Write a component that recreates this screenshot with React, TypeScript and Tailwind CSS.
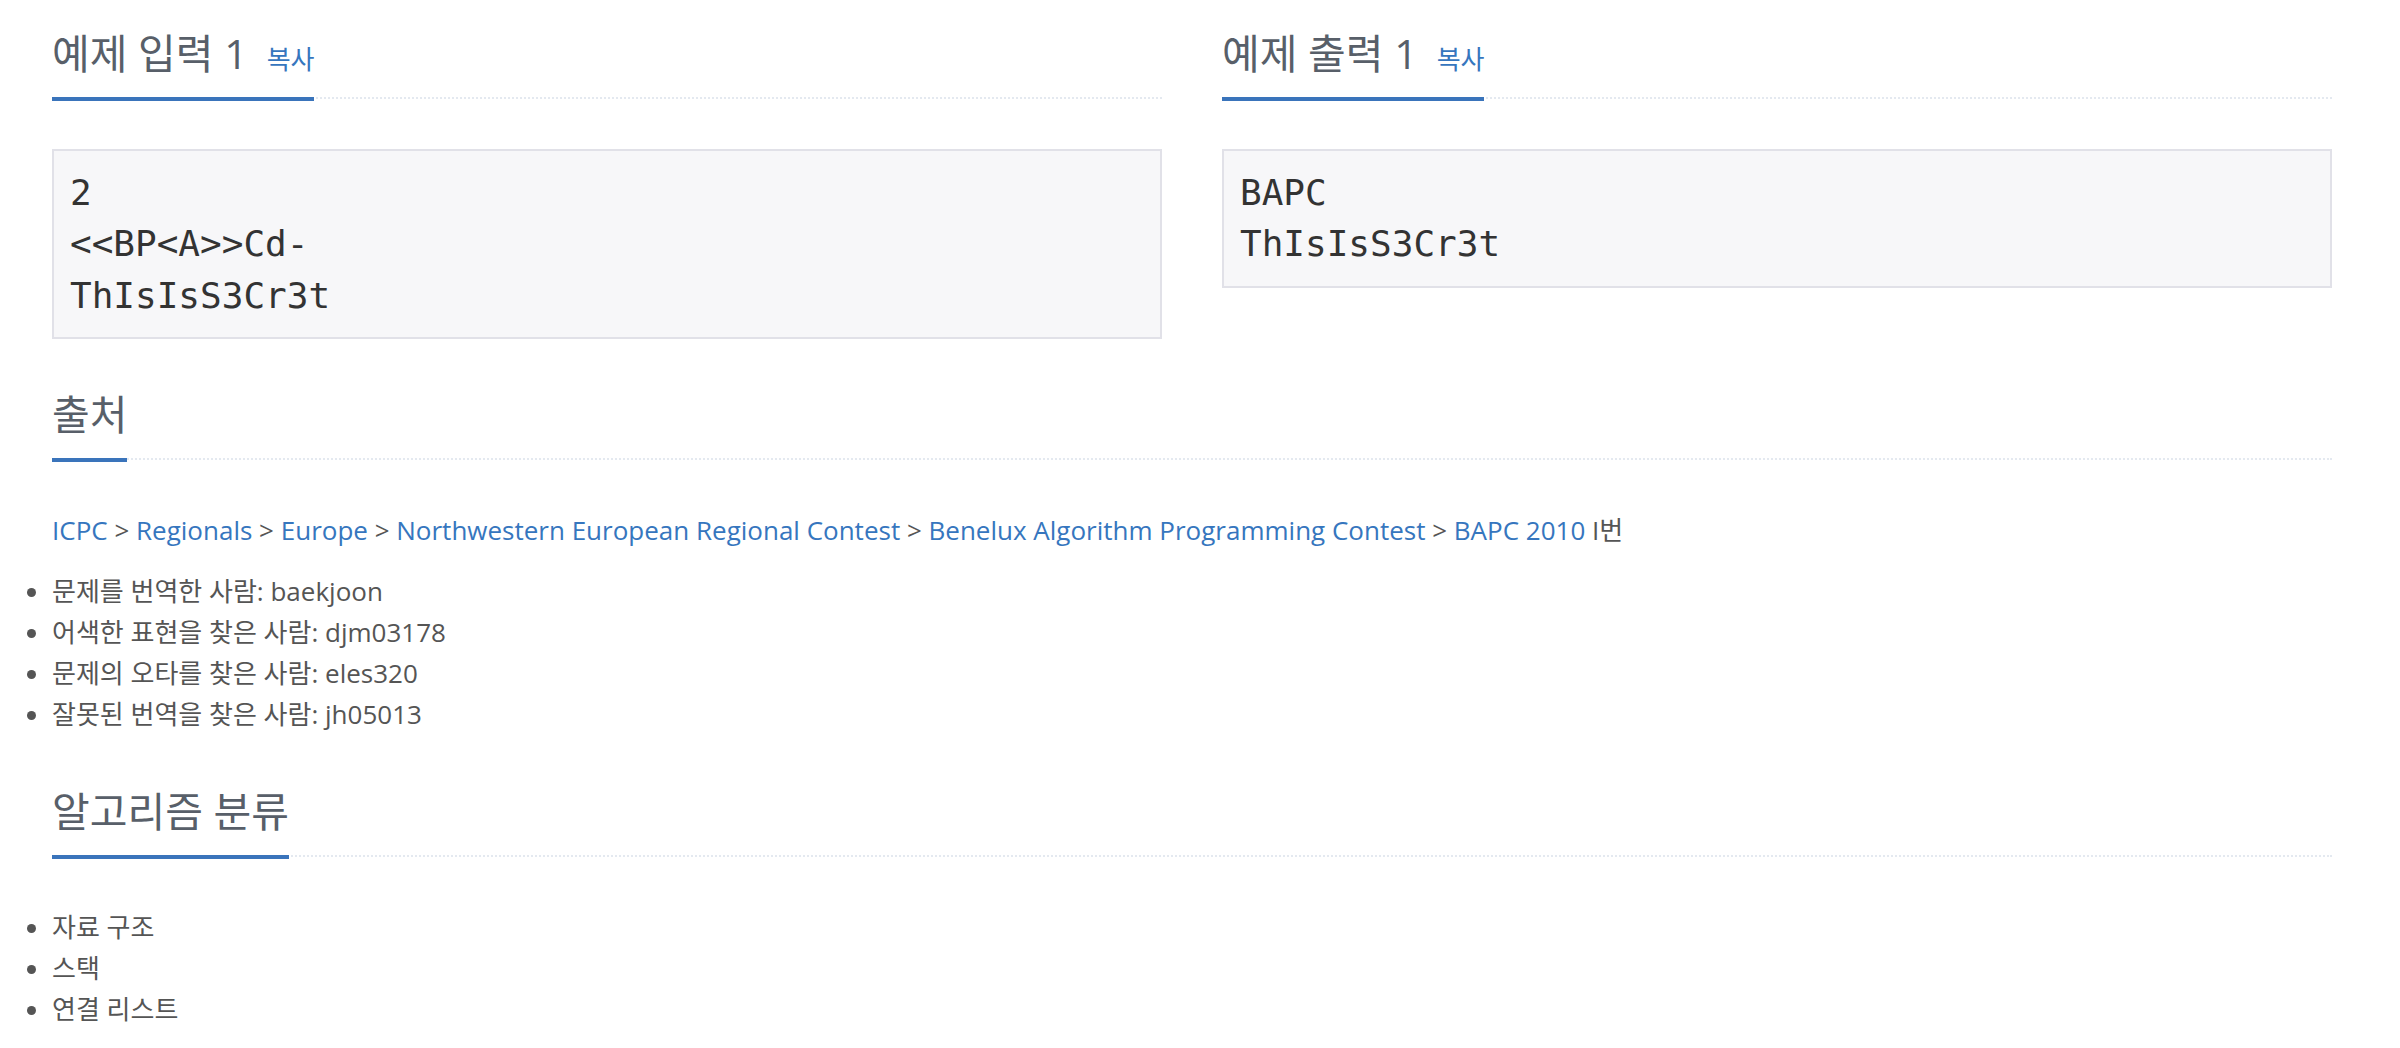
import React from 'react';

const sampleInput = `2
<<BP<A>>Cd-
ThIsIsS3Cr3t`;

const sampleOutput = `BAPC
ThIsIsS3Cr3t`;

const sourcePath = [
  'ICPC',
  'Regionals',
  'Europe',
  'Northwestern European Regional Contest',
  'Benelux Algorithm Programming Contest',
  'BAPC 2010',
];

const credits = [
  '문제를 번역한 사람: baekjoon',
  '어색한 표현을 찾은 사람: djm03178',
  '문제의 오타를 찾은 사람: eles320',
  '잘못된 번역을 찾은 사람: jh05013',
];

const tags = ['자료 구조', '스택', '연결 리스트'];

const Headline: React.FC<{ title: string; copy?: boolean }> = ({ title, copy }) => (
  <div className="flex border-b-2 border-dotted border-[#e4e9f0] mb-[50px]">
    <h2 className="-mb-[4px] flex items-baseline border-b-4 border-[#3a74bb] pb-[20px] text-[41px] leading-[48px] font-normal text-[#585f69]">
      {title}
      {copy && (
        <button className="ml-[19px] text-[26px] leading-[30px] text-[#3676be] cursor-pointer">복사</button>
      )}
    </h2>
  </div>
);

const SampleBox: React.FC<{ text: string }> = ({ text }) => (
  <pre className="m-0 border-2 border-[#e1e1e8] bg-[#f7f7f9] p-[16px] font-['DejaVu_Sans_Mono',monospace] text-[36px] leading-[1.428571] text-[#333]">
    {text}
  </pre>
);

const App: React.FC = () => {
  return (
    <div className="min-h-screen bg-white pl-[52px] pr-[68px] pt-[29px] font-['Open_Sans','Noto_Sans_CJK_KR',sans-serif] text-[26px] leading-[41px] text-[#555]">
      {/* Samples */}
      <div className="grid grid-cols-2 items-start gap-x-[60px]">
        <section>
          <Headline title="예제 입력 1" copy />
          <SampleBox text={sampleInput} />
        </section>
        <section>
          <Headline title="예제 출력 1" copy />
          <SampleBox text={sampleOutput} />
        </section>
      </div>

      {/* Source */}
      <section className="mt-[51px]">
        <Headline title="출처" />
        <p className="mb-[20px]">
          {sourcePath.map((name, i) => (
            <React.Fragment key={name}>
              {i > 0 && ' > '}
              <a href="#" className="text-[#3676be]">
                {name}
              </a>
            </React.Fragment>
          ))}{' '}
          I번
        </p>
        <ul className="list-disc list-outside pl-0">
          {credits.map((c) => (
            <li key={c}>{c}</li>
          ))}
        </ul>
      </section>

      {/* Tags */}
      <section className="mt-[52px]">
        <Headline title="알고리즘 분류" />
        <ul className="list-disc list-outside pl-0">
          {tags.map((t) => (
            <li key={t}>{t}</li>
          ))}
        </ul>
      </section>
    </div>
  );
};

export default App;
